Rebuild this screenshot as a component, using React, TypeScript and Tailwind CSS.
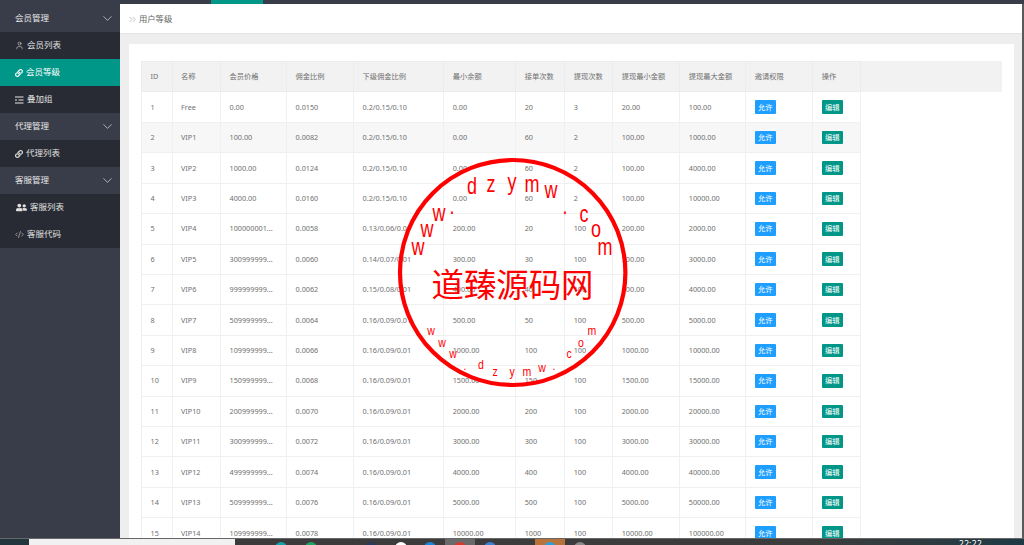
import { ChevronDown, ChevronsRight, Code2, User } from "lucide-react";
import { FaLink, FaUserFriends } from "react-icons/fa";

const columns = [
  { title: "ID", width: "w-[30.5px]" },
  { title: "名称", width: "w-[48.5px]" },
  { title: "会员价格", width: "w-[66px]" },
  { title: "佣金比例", width: "w-[67px]" },
  { title: "下级佣金比例", width: "w-[90px]" },
  { title: "最小余额", width: "w-[72px]" },
  { title: "接单次数", width: "w-[49px]" },
  { title: "提现次数", width: "w-[48px]" },
  { title: "提现最小金额", width: "w-[67px]" },
  { title: "提现最大金额", width: "w-[66px]" },
  { title: "邀请权限", width: "w-[67px]" },
  { title: "操作", width: "w-[48px]" },
];

const rows = [
  ["1", "Free", "0.00", "0.0150", "0.2/0.15/0.10", "0.00", "20", "3", "20.00", "100.00"],
  ["2", "VIP1", "100.00", "0.0082", "0.2/0.15/0.10", "0.00", "60", "2", "100.00", "1000.00"],
  ["3", "VIP2", "1000.00", "0.0124", "0.2/0.15/0.10", "0.00", "60", "2", "100.00", "4000.00"],
  ["4", "VIP3", "4000.00", "0.0160", "0.2/0.15/0.10", "0.00", "60", "2", "100.00", "10000.00"],
  ["5", "VIP4", "100000001...", "0.0058", "0.13/0.06/0.01", "200.00", "20", "100", "200.00", "2000.00"],
  ["6", "VIP5", "300999999...", "0.0060", "0.14/0.07/0.01", "300.00", "30", "100", "300.00", "3000.00"],
  ["7", "VIP6", "999999999...", "0.0062", "0.15/0.08/0.01", "400.00", "40", "100", "400.00", "4000.00"],
  ["8", "VIP7", "509999999...", "0.0064", "0.16/0.09/0.01", "500.00", "50", "100", "500.00", "5000.00"],
  ["9", "VIP8", "109999999...", "0.0066", "0.16/0.09/0.01", "1000.00", "100", "100", "1000.00", "10000.00"],
  ["10", "VIP9", "150999999...", "0.0068", "0.16/0.09/0.01", "1500.00", "150", "100", "1500.00", "15000.00"],
  ["11", "VIP10", "200999999...", "0.0070", "0.16/0.09/0.01", "2000.00", "200", "100", "2000.00", "20000.00"],
  ["12", "VIP11", "300999999...", "0.0072", "0.16/0.09/0.01", "3000.00", "300", "100", "3000.00", "30000.00"],
  ["13", "VIP12", "499999999...", "0.0074", "0.16/0.09/0.01", "4000.00", "400", "100", "4000.00", "40000.00"],
  ["14", "VIP13", "509999999...", "0.0076", "0.16/0.09/0.01", "5000.00", "500", "100", "5000.00", "50000.00"],
  ["15", "VIP14", "109999999...", "0.0078", "0.16/0.09/0.01", "10000.00", "1000", "100", "10000.00", "100000.00"],
];

const topLetters: [string, number, number][] = [
  ["w", 418, 247], ["w", 427, 229], ["w", 439, 213], [".", 452, 206],
  ["d", 472, 186], ["z", 491, 184], ["y", 512, 182], ["m", 532, 184],
  ["w", 551, 190], [".", 565, 206], ["c", 584, 214], ["o", 596, 229], ["m", 605, 247],
];

const bottomLetters: [string, number, number][] = [
  ["w", 431, 331], ["w", 442, 343], ["w", 453, 354], [".", 465, 366],
  ["d", 481, 365], ["z", 495, 372], ["y", 512, 372], ["m", 527, 372],
  ["w", 542, 368], [".", 554, 366], ["c", 569, 354], ["o", 581, 343], ["m", 592, 331],
];

const taskIcons = [
  { x: "bg-[#14a3a8]" },
  { x: "bg-[#1fa463]" },
  { x: "" },
  { x: "bg-[#2a3a5e]" },
  { x: "bg-white" },
  { x: "bg-[#1787e0]" },
  { x: "bg-[#d9382c]", tab: "bg-[#6a6a6a]" },
  { x: "bg-[#3a82d8]" },
  { x: "" },
  { x: "bg-[#2a9fd8]", tab: "bg-[#b8733a]" },
  { x: "bg-[#8a8a8a]" },
];

function GroupHead({ label }: { label: string }) {
  return (
    <div className="flex h-[27px] items-center justify-between bg-[#393d49] pl-[15px] pr-[5.5px] text-[8.5px] text-[#e8e8e8]">
      <span>{label}</span>
      <ChevronDown size={15} strokeWidth={1.2} className="text-[#d5d5d5]" />
    </div>
  );
}

function SubItem({ icon, label, active }: { icon: React.ReactNode; label: string; active?: boolean }) {
  return (
    <div
      className={
        active
          ? "flex h-[27px] items-center gap-[3px] bg-[#009688] pl-[15px] text-[8.5px] text-white"
          : "flex h-[27px] items-center gap-[3px] bg-[#282b33] pl-[15px] text-[8.5px] text-[#e0e0e0]"
      }
    >
      {icon}
      <span>{label}</span>
    </div>
  );
}

function StackIcon() {
  return (
    <svg width="9" height="8" viewBox="0 0 9 8" className="text-[#e8e8e8]">
      <path d="M0 1h8.500M0 4h2M3.500 4h5M0 7h8.500" stroke="currentColor" strokeWidth="1.200" fill="none" />
    </svg>
  );
}

function Stamp() {
  return (
    <svg className="pointer-events-none absolute left-0 top-0" width="1024" height="545" viewBox="0 0 1024 545">
      <ellipse cx="512.700" cy="272.500" rx="112.700" ry="112.500" fill="none" stroke="#ff0000" strokeWidth="4.200" />
      {topLetters.map(([ch, x, y], i) => (
        <text
          key={i}
          transform={`translate(${x} ${y}) scale(1 1.3)`}
          textAnchor="middle"
          dominantBaseline="central"
          fontSize="18"
          fontFamily="'Liberation Sans', sans-serif"
          fill="#ff0000"
        >
          {ch}
        </text>
      ))}
      {bottomLetters.map(([ch, x, y], i) => (
        <text
          key={i}
          transform={`translate(${x} ${y}) scale(1 1.25)`}
          textAnchor="middle"
          dominantBaseline="central"
          fontSize="10.500"
          fontFamily="'Liberation Sans', sans-serif"
          fill="#ff0000"
        >
          {ch}
        </text>
      ))}
      <text
        x="512.500"
        y="282"
        textAnchor="middle"
        dominantBaseline="central"
        fontSize="32.400"
        fontFamily="'Noto Sans CJK SC', sans-serif"
        fill="#ff0000"
      >
        道臻源码网
      </text>
    </svg>
  );
}

export default function App() {
  return (
    <div className="relative flex h-[545px] w-[1024px] flex-col overflow-hidden bg-[#eeeeee] font-['Noto_Sans','Noto_Sans_CJK_SC',sans-serif]">
      <div className="flex h-[4px] shrink-0 bg-[#393d49]">
        <div className="ml-[211px] w-[52px] bg-[#009688]" />
      </div>

      <div className="flex min-h-0 flex-1">
        <aside className="w-[120px] shrink-0 bg-[#393d49] pt-[1px]">
          <GroupHead label="会员管理" />
          <SubItem icon={<User size={9} strokeWidth={1.5} />} label="会员列表" />
          <SubItem icon={<FaLink size={8} />} label="会员等级" active />
          <SubItem icon={<StackIcon />} label="叠加组" />
          <GroupHead label="代理管理" />
          <SubItem icon={<FaLink size={8} />} label="代理列表" />
          <GroupHead label="客服管理" />
          <SubItem icon={<FaUserFriends size={11} className="ml-[1px]" />} label="客服列表" />
          <SubItem icon={<Code2 size={9} strokeWidth={1.5} />} label="客服代码" />
        </aside>

        <main className="flex min-w-0 flex-1 flex-col">
          <div className="flex h-[30px] shrink-0 items-center gap-[1px] border-b border-[#e4e4e4] bg-white pl-[7px] pt-[2px] text-[8.300px] text-[#666666]">
            <ChevronsRight size={11} strokeWidth={1.3} className="text-[#999999]" />
            <span>用户等级</span>
          </div>
          <div className="ml-[9px] mr-[8px] mt-[10px] min-h-0 flex-1 overflow-hidden bg-white pl-[12px] pr-[12px] pt-[17px]">
            <table className="w-[861px] table-fixed border-collapse text-[7.250px] text-[#707070]">
              <thead>
                <tr className="h-[30.400px] bg-[#f2f2f2]">
                  {columns.map((c) => (
                    <th key={c.title} className={`${c.width} border border-[#ececec] pl-[8.5px] text-left font-normal`}>
                      {c.title}
                    </th>
                  ))}
                  <th className="w-[141px] border-y border-[#f2f2f2]" />
                </tr>
              </thead>
              <tbody>
                {rows.map((row, i) => (
                  <tr key={row[0]} className={i === 1 ? "h-[30.430px] bg-[#f7f7f7]" : "h-[30.430px]"}>
                    {row.map((v, j) => (
                      <td key={j} className="whitespace-nowrap border border-[#f0f0f0] pl-[8.5px]">
                        {v}
                      </td>
                    ))}
                    <td className="border border-[#f0f0f0] pl-[8.5px]">
                      <span className="flex h-[13.500px] w-[21px] items-center justify-center rounded-[1px] bg-[#1e9fff] text-white">
                        允许
                      </span>
                    </td>
                    <td className="border border-[#f0f0f0] pl-[8.5px]">
                      <span className="flex h-[13.500px] w-[21px] items-center justify-center rounded-[1px] bg-[#009688] text-white">
                        编辑
                      </span>
                    </td>
                  </tr>
                ))}
              </tbody>
            </table>
          </div>
        </main>
        <div className="w-[2px] shrink-0 bg-[#5a5a5a]" />
      </div>

      <div className="flex h-[7px] shrink-0 overflow-hidden border-t border-[#666666] bg-gradient-to-r from-[#3c3c3c] from-80% to-[#1d3a44] text-white">
        <div className="w-[29px] bg-[#22343c]" />
        <div className="w-[206px] bg-[#f1f1f1]" />
        <div className="ml-[31px] flex">
          {taskIcons.map((t, i) => (
            <div key={i} className={`flex h-full w-[29.900px] justify-center pt-[3px] ${t.tab ?? ""}`}>
              {t.x && <div className={`h-[12px] w-[12px] shrink-0 rounded-full ${t.x}`} />}
            </div>
          ))}
        </div>
        <span className="ml-[364px] text-[9px] leading-[9px]">22:22</span>
      </div>

      <Stamp />
    </div>
  );
}
